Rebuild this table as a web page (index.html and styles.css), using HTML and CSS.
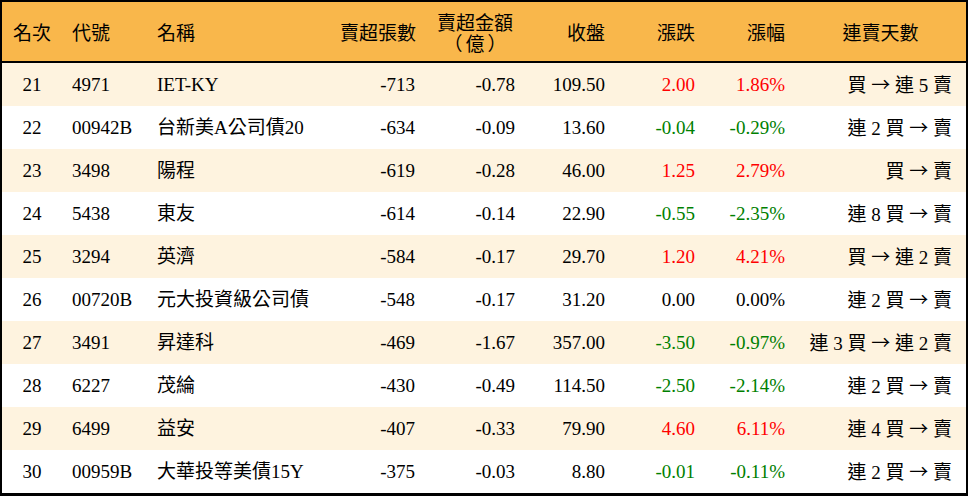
FILE: index.html
```html
<!DOCTYPE html>
<html lang="zh-Hant">
<head>
<meta charset="utf-8">
<title>賣超排行</title>
<link rel="stylesheet" href="styles.css">
</head>
<body>
<div class="frame">
<table class="rank">
<colgroup>
<col class="c-rank"><col class="c-code"><col class="c-name"><col class="c-vol"><col class="c-amt"><col class="c-close"><col class="c-chg"><col class="c-pct"><col class="c-days">
</colgroup>
<thead>
<tr>
<th class="ctr">名次</th>
<th class="lft">代號</th>
<th class="lft">名稱</th>
<th class="rgt">賣超張數</th>
<th class="ctr two"><span class="hl">賣超金額</span><span class="hl unit">（億）</span></th>
<th class="rgt">收盤</th>
<th class="rgt">漲跌</th>
<th class="rgt">漲幅</th>
<th class="ctr">連賣天數</th>
</tr>
</thead>
<tbody>
<tr class="odd"><td class="ctr">21</td><td class="lft">4971</td><td class="lft">IET-KY</td><td class="rgt">-713</td><td class="rgt">-0.78</td><td class="rgt">109.50</td><td class="rgt up">2.00</td><td class="rgt up">1.86%</td><td class="rgt">買 <span class="arrow">→</span> 連 5 賣</td></tr>
<tr><td class="ctr">22</td><td class="lft">00942B</td><td class="lft">台新美A公司債20</td><td class="rgt">-634</td><td class="rgt">-0.09</td><td class="rgt">13.60</td><td class="rgt dn">-0.04</td><td class="rgt dn">-0.29%</td><td class="rgt">連 2 買 <span class="arrow">→</span> 賣</td></tr>
<tr class="odd"><td class="ctr">23</td><td class="lft">3498</td><td class="lft">陽程</td><td class="rgt">-619</td><td class="rgt">-0.28</td><td class="rgt">46.00</td><td class="rgt up">1.25</td><td class="rgt up">2.79%</td><td class="rgt">買 <span class="arrow">→</span> 賣</td></tr>
<tr><td class="ctr">24</td><td class="lft">5438</td><td class="lft">東友</td><td class="rgt">-614</td><td class="rgt">-0.14</td><td class="rgt">22.90</td><td class="rgt dn">-0.55</td><td class="rgt dn">-2.35%</td><td class="rgt">連 8 買 <span class="arrow">→</span> 賣</td></tr>
<tr class="odd"><td class="ctr">25</td><td class="lft">3294</td><td class="lft">英濟</td><td class="rgt">-584</td><td class="rgt">-0.17</td><td class="rgt">29.70</td><td class="rgt up">1.20</td><td class="rgt up">4.21%</td><td class="rgt">買 <span class="arrow">→</span> 連 2 賣</td></tr>
<tr><td class="ctr">26</td><td class="lft">00720B</td><td class="lft">元大投資級公司債</td><td class="rgt">-548</td><td class="rgt">-0.17</td><td class="rgt">31.20</td><td class="rgt">0.00</td><td class="rgt">0.00%</td><td class="rgt">連 2 買 <span class="arrow">→</span> 賣</td></tr>
<tr class="odd"><td class="ctr">27</td><td class="lft">3491</td><td class="lft">昇達科</td><td class="rgt">-469</td><td class="rgt">-1.67</td><td class="rgt">357.00</td><td class="rgt dn">-3.50</td><td class="rgt dn">-0.97%</td><td class="rgt">連 3 買 <span class="arrow">→</span> 連 2 賣</td></tr>
<tr><td class="ctr">28</td><td class="lft">6227</td><td class="lft">茂綸</td><td class="rgt">-430</td><td class="rgt">-0.49</td><td class="rgt">114.50</td><td class="rgt dn">-2.50</td><td class="rgt dn">-2.14%</td><td class="rgt">連 2 買 <span class="arrow">→</span> 賣</td></tr>
<tr class="odd"><td class="ctr">29</td><td class="lft">6499</td><td class="lft">益安</td><td class="rgt">-407</td><td class="rgt">-0.33</td><td class="rgt">79.90</td><td class="rgt up">4.60</td><td class="rgt up">6.11%</td><td class="rgt">連 4 買 <span class="arrow">→</span> 賣</td></tr>
<tr><td class="ctr">30</td><td class="lft">00959B</td><td class="lft">大華投等美債15Y</td><td class="rgt">-375</td><td class="rgt">-0.03</td><td class="rgt">8.80</td><td class="rgt dn">-0.01</td><td class="rgt dn">-0.11%</td><td class="rgt">連 2 買 <span class="arrow">→</span> 賣</td></tr>
</tbody>
</table>
</div>
</body>
</html>
```
FILE: styles.css
```css
html, body {
  margin: 0;
  padding: 0;
  background: #ffffff;
}

.frame {
  width: 964px;
  border-style: solid;
  border-color: #000;
  border-width: 2px 2px 3px 2px;
  background: #fff;
}

.rank {
  width: 964px;
  table-layout: fixed;
  border-collapse: separate;
  border-spacing: 0;
  font-family: "Liberation Serif", "Noto Sans CJK TC", serif;
  font-size: 19px;
  color: #000;
}

.c-rank { width: 60px; }
.c-code { width: 85px; }
.c-name { width: 183px; }
.c-vol { width: 95px; }
.c-amt { width: 100px; }
.c-close { width: 90px; }
.c-chg { width: 90px; }
.c-pct { width: 90px; }
.c-days { width: 171px; }

.rank th {
  height: 59px;
  padding: 0 10px;
  background: #f9b74b;
  border-bottom: 2px solid #000;
  font-weight: normal;
  font-family: "Noto Sans CJK TC", sans-serif;
  font-size: 19px;
  line-height: 24px;
  vertical-align: middle;
  white-space: nowrap;
}

.rank th.two {
  line-height: 21px;
}

.hl {
  display: block;
  height: 21px;
  overflow: visible;
}

.unit {
  letter-spacing: 3px;
  padding-left: 3px;
}

.rank td {
  height: 43px;
  padding: 0 10px;
  vertical-align: middle;
  white-space: nowrap;
  line-height: 24px;
}

.rank tbody tr.odd td {
  background: #fef3df;
}

.rank td:last-child {
  padding-right: 14px;
}

.arrow {
  font-family: "Noto Sans CJK TC", sans-serif;
}

.ctr { text-align: center; }
.lft { text-align: left; }
.rgt { text-align: right; }

.up { color: #ff0000; }
.dn { color: #008000; }
```
